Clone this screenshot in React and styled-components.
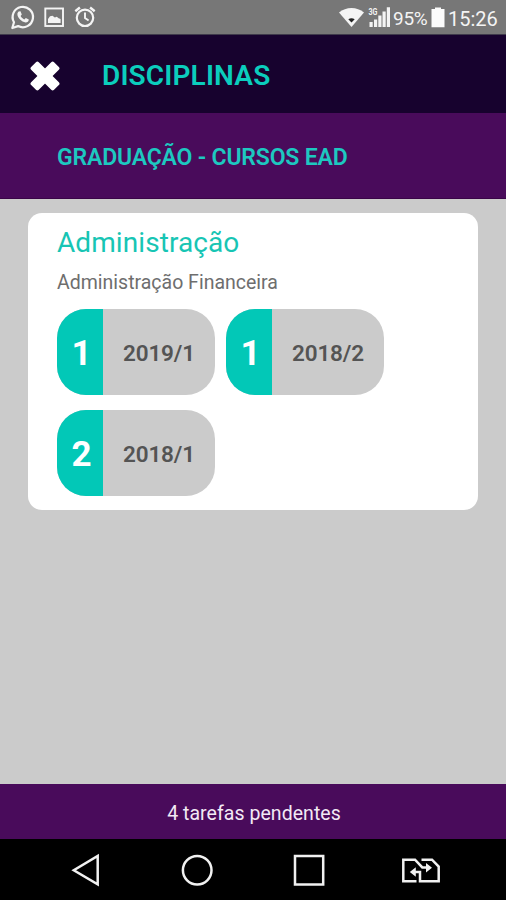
import React from "react";
import styled, { createGlobalStyle } from "styled-components";

const GlobalStyle = createGlobalStyle`
  * {
    box-sizing: border-box;
  }
  body {
    margin: 0;
    font-family: Roboto, "Liberation Sans", sans-serif;
  }
  svg {
    display: block;
    flex: none;
  }
`;

const Screen = styled.div`
  display: flex;
  flex-direction: column;
  width: 506px;
  height: 900px;
  overflow: hidden;
  background: #cbcbcb;
`;

const StatusBar = styled.div`
  display: flex;
  align-items: center;
  height: 35px;
  padding: 0 7px 0 10px;
  background: #777777;
  border-bottom: 1px solid #3f3a4b;
  color: #f4f4f4;
`;

const StatusGroup = styled.div`
  display: flex;
  align-items: center;
  margin-left: ${(props) => (props.$right ? "auto" : 0)};
`;

const StatusText = styled.span`
  width: ${(props) => props.$width}px;
  margin-left: ${(props) => props.$gap}px;
  padding-top: 3px;
  font-size: ${(props) => props.$size}px;
  line-height: 22px;
  letter-spacing: ${(props) => props.$spacing || 0}px;
  white-space: nowrap;
`;

const Header = styled.header`
  display: flex;
  align-items: center;
  height: 78px;
  padding-left: 30px;
  background: #17022e;
`;

const CloseButton = styled.button`
  width: 30px;
  height: 30px;
  margin: 3px 42px 0 0;
  padding: 0;
  border: 0;
  background: none;
`;

const Title = styled.h1`
  margin: 3px 0 0;
  font-size: 28px;
  font-weight: 600;
  line-height: 34px;
  letter-spacing: 0.15px;
  color: #0bcdbd;
`;

const Subheader = styled.div`
  display: flex;
  align-items: center;
  height: 86px;
  padding: 4px 0 0 57px;
  background: #490b5b;
  border-bottom: 1px solid #3a0548;
  font-size: 23px;
  font-weight: 600;
  letter-spacing: -0.17px;
  color: #1dc8c0;
`;

const Content = styled.main`
  flex: 1;
  padding: 14px 28px;
`;

const Card = styled.section`
  height: 297px;
  padding: 13px 28px 0 29px;
  border-radius: 14px;
  background: #fff;
`;

const CourseName = styled.h2`
  margin: 0;
  font-size: 28px;
  font-weight: 400;
  line-height: 34px;
  letter-spacing: 0.08px;
  color: #17c5b4;
`;

const SubjectName = styled.p`
  margin: 11px 0 14px;
  font-size: 19.5px;
  line-height: 24px;
  color: #6e6e6e;
`;

const Terms = styled.div`
  display: flex;
  flex-wrap: wrap;
  gap: 15px 11px;
`;

const Term = styled.div`
  display: flex;
  width: 158px;
  height: 86px;
  border-radius: 29px;
  overflow: hidden;
  background: #cbcbcb;
`;

const TermCount = styled.span`
  display: flex;
  align-items: center;
  justify-content: center;
  width: 46px;
  padding: 2px 0 0 3px;
  background: #02c8b7;
  font-size: 35px;
  font-weight: 700;
  color: #fff;
`;

const TermLabel = styled.span`
  display: flex;
  flex: 1;
  align-items: center;
  padding: 1px 0 0 20px;
  font-size: 22.5px;
  font-weight: 600;
  letter-spacing: -0.15px;
  color: #545454;
`;

const Pending = styled.footer`
  display: flex;
  align-items: center;
  justify-content: center;
  height: 55px;
  padding: 4px 0 0 2px;
  background: #490b5b;
  font-size: 19.5px;
  letter-spacing: 0.05px;
  color: #f2e9f5;
`;

const NavBar = styled.nav`
  height: 61px;
  background: #000;
`;

const terms = [
  { count: 1, label: "2019/1" },
  { count: 1, label: "2018/2" },
  { count: 2, label: "2018/1" },
];

function NotificationIcons() {
  return (
    <svg width="90" height="34" viewBox="10 0 90 34" fill="none" stroke="#f4f4f4">
      {/* whatsapp */}
      <path
        d="M12.3 28l1.7-5.8a10.2 10.2 0 1 1 4.1 3.9z"
        strokeWidth="2.2"
        strokeLinejoin="round"
      />
      <path
        d="M18.7 11.6l1.8-.4 1.3 3.2-1.2 1.6c1 1.7 2.1 2.7 3.7 3.4l1.5-1.5 3 1.5c0 2.2-1.7 3.1-3.2 3-4-.5-8-4.5-8.2-8.2 0-1 .5-2 1.3-2.6z"
        fill="#f4f4f4"
        stroke="none"
      />
      {/* image */}
      <rect x="45.3" y="8.5" width="17.7" height="17.5" strokeWidth="1.9" />
      <path
        d="M48 23v-4l2-2.8 2.5-.4 2.3 1.7 2-.8 1.8 1.5 2 .8V23z"
        fill="#f4f4f4"
        stroke="none"
      />
      {/* alarm */}
      <circle cx="85" cy="17.8" r="8.2" strokeWidth="2.2" />
      <path d="M85 12.5v5.5l3.6 2.6" strokeWidth="1.9" />
      <path d="M75.3 11.2l4.6-3.7M94.7 11.2l-4.6-3.7" strokeWidth="2.4" />
    </svg>
  );
}

function SignalIcons() {
  return (
    <svg width="53" height="34" viewBox="338 0 53 34" fill="#f4f4f4">
      <path d="M338 12.4c7-6 18-6 25 0L350.5 27z" />
      <path d="M347.3 19.2c2-1.2 4.4-1.2 6.4 0l-3.2 3.3z" fill="#222" />
      <text
        x="367.5"
        y="14.5"
        fontSize="8.5"
        fontWeight="700"
        textLength="9"
        lengthAdjust="spacingAndGlyphs"
      >
        3G
      </text>
      <path d="M368.5 22h3.2v5h-3.2zM373 19.5h3.2V27H373zM377.3 15.5h3.2V27h-3.2zM381.5 11.5h3.2V27h-3.2zM385.8 7.3h3.2V27h-3.2z" />
    </svg>
  );
}

function BatteryIcon() {
  return (
    <svg width="14" height="34" viewBox="0 0 14 34">
      <path d="M4 7.5h6V9h3.5v18.2H.5V9H4z" fill="#fbfbfb" />
    </svg>
  );
}

function NavIcons() {
  return (
    <svg
      width="506"
      height="61"
      viewBox="0 839 506 61"
      fill="none"
      stroke="#f1f1f1"
      strokeWidth="2.5"
    >
      <path d="M97.7 856v28.3L73.8 870.3z" />
      <circle cx="197.2" cy="870.2" r="14.3" />
      <rect x="295" y="856" width="28.2" height="28.5" />
      {/* sim switch */}
      <path d="M416.5 881.3h-13.2v-21.6H415l7.3 7.7h7.5M421.5 859.7H432l6.7 6.8v14.8H420v-9.4h-6.5" />
      <path d="M432 867.7l-6-4.7v9.4zM409.8 872l6-4.7v9.4z" fill="#f1f1f1" stroke="none" />
    </svg>
  );
}

export default function App() {
  return (
    <>
      <GlobalStyle />
      <Screen>
        <StatusBar>
          <StatusGroup>
            <NotificationIcons />
          </StatusGroup>
          <StatusGroup $right>
            <SignalIcons />
            <StatusText $width={38} $gap={1} $size={19} $spacing={-0.3}>
              95%
            </StatusText>
            <BatteryIcon />
            <StatusText $width={51} $gap={3} $size={20}>
              15:26
            </StatusText>
          </StatusGroup>
        </StatusBar>
        <Header>
          <CloseButton aria-label="Fechar">
            <svg width="30" height="30" viewBox="0 0 30 30" fill="#fff">
              <g transform="rotate(45 15 15)">
                <rect x="-1.2" y="9.6" width="32.4" height="10.8" rx="2" />
                <rect x="9.6" y="-1.2" width="10.8" height="32.4" rx="2" />
              </g>
            </svg>
          </CloseButton>
          <Title>DISCIPLINAS</Title>
        </Header>
        <Subheader>GRADUAÇÃO - CURSOS EAD</Subheader>
        <Content>
          <Card>
            <CourseName>Administração</CourseName>
            <SubjectName>Administração Financeira</SubjectName>
            <Terms>
              {terms.map((term) => (
                <Term key={term.label}>
                  <TermCount>{term.count}</TermCount>
                  <TermLabel>{term.label}</TermLabel>
                </Term>
              ))}
            </Terms>
          </Card>
        </Content>
        <Pending>4 tarefas pendentes</Pending>
        <NavBar>
          <NavIcons />
        </NavBar>
      </Screen>
    </>
  );
}
